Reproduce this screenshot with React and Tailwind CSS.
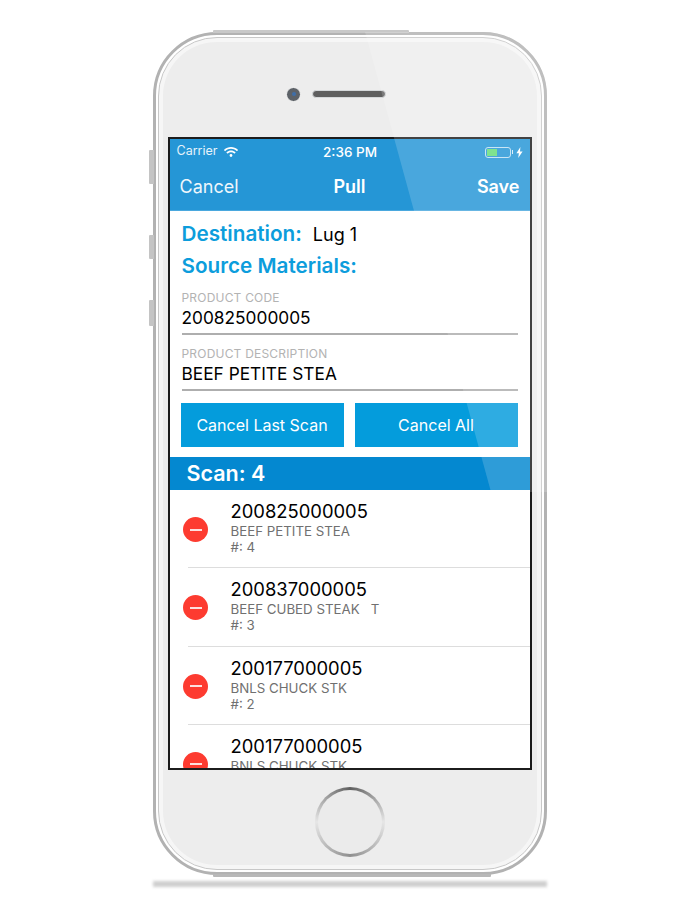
import React from "react";
import { FaWifi } from "react-icons/fa";

const rows = [
  { code: "200825000005", name: "BEEF PETITE STEA", count: 4 },
  { code: "200837000005", name: "BEEF CUBED STEAK   T", count: 3 },
  { code: "200177000005", name: "BNLS CHUCK STK", count: 2 },
  { code: "200177000005", name: "BNLS CHUCK STK", count: 1 },
];

const SideButton = ({ className }) => (
  <div className={`absolute left-[-7px] w-[5px] bg-[#c4c4c4] rounded-l-[1px] ${className}`} />
);

const Field = ({ label, value }) => (
  <div className="mx-[12px] h-[56px] flex flex-col border-b-2 border-[#aeaeae]">
    <div className="mt-[11px] text-[12px] leading-[16px] text-[#b3b3b3] tracking-[0.2px]">{label}</div>
    <div className="text-[17.3px] leading-[24px] text-black">{value}</div>
  </div>
);

const Row = ({ code, name, count, last }) => (
  <div className="h-[78.3px] shrink-0 flex">
    <div className="w-[61px] shrink-0 flex justify-center items-start">
      <div className="ml-[-9px] mt-[27px] w-[25px] h-[25px] rounded-full bg-[#fd3b30] flex items-center justify-center">
        <div className="w-[12px] h-[2px] bg-[#fde0de]" />
      </div>
    </div>
    <div className={`flex-1 pt-[9px] ${last ? "" : "border-b border-[#dddddd]"} ml-[-43px] pl-[43px]`}>
      <div className="text-[18.4px] leading-[24px] text-black">{code}</div>
      <div className="text-[13.3px] leading-[16px] text-[#707070] whitespace-pre">{name}</div>
      <div className="text-[13.3px] leading-[16px] text-[#707070]">#: {count}</div>
    </div>
  </div>
);

export default function App() {
  return (
    <div className="w-[700px] h-[900px] bg-white flex flex-col items-center pt-[32px] font-['Inter','Liberation_Sans',sans-serif]">
      <div className="relative w-[394px] h-[843px] shrink-0 rounded-[64px] border-[3px] border-[#b2b2b2] bg-white p-[2px]">
        <SideButton className="top-[115px] h-[34px]" />
        <SideButton className="top-[200px] h-[24px]" />
        <SideButton className="top-[265px] h-[26px]" />
        <div className="absolute left-[57px] top-[-5px] w-[196px] h-[3px] bg-[#c8c8c8] rounded-t-[1px]" />
        <div className="absolute left-[57px] bottom-[-5px] w-[278px] h-[3px] bg-[#b8b8b8] rounded-b-[1px]" />

        <div className="w-full h-full rounded-[59px] border border-[#c8c8c8] bg-[#f6f6f6] p-[4px]">
          <div className="w-full h-full rounded-[54px] bg-[#ededed] flex flex-col items-center">
            <div className="h-[95px] shrink-0 w-full flex items-center justify-center gap-[11px] pt-[9px] pr-[28px]">
              <div className="w-[15px] h-[15px] rounded-full border border-[#f5f5f5] bg-[#5d6268] flex items-center justify-center">
                <div className="w-[4px] h-[4px] rounded-full bg-[#3f6ea8]" />
              </div>
              <div className="w-[74px] h-[8px] rounded-full border border-[#d5d8da] bg-[#5f5f5f]" />
            </div>

            {/* screen */}
            <div className="w-[364px] h-[633px] shrink-0 mr-[1px] border-2 border-[#1c1c1c] bg-white flex flex-col overflow-hidden">
              <div className="h-[72px] shrink-0 bg-[#2596d6] border-b border-[#4aa8de] text-white flex flex-col">
                <div className="h-[24px] shrink-0 mt-[1px] px-[7px] flex items-center relative">
                  <span className="text-[12.5px] text-[#e6f3fb] mt-[-1px]">Carrier</span>
                  <FaWifi className="ml-[7px] text-[14px] mt-[-1px]" />
                  <span className="absolute left-[1px] right-0 text-center text-[13.5px] font-medium">2:36 PM</span>
                  <div className="ml-auto flex items-center">
                    <div className="w-[26px] h-[11px] border border-[#bfe0f3] rounded-[3px] p-[1px]">
                      <div className="w-[10px] h-full bg-[#66de7a]" />
                    </div>
                    <div className="w-[1px] h-[4px] bg-[#d6ecf8] ml-[1px]" />
                    <svg width="7" height="11" viewBox="0 0 7 11" className="ml-[3px]">
                      <path d="M4.4 0 0.4 6.2h2.5L2.2 11 6.6 4.5H4L4.4 0z" fill="white" />
                    </svg>
                  </div>
                </div>
                <div className="flex-1 px-[10px] pb-[1px] flex items-center justify-between text-[18px] relative">
                  <span className="text-[#eef7fc]">Cancel</span>
                  <span className="absolute left-0 right-0 text-center font-semibold">Pull</span>
                  <span className="font-semibold">Save</span>
                </div>
              </div>

              <div className="shrink-0 flex flex-col">
                <div className="h-[44px] shrink-0 mx-[12px] pt-[9px] flex items-baseline text-black">
                  <span className="text-[20.7px] leading-[28px] font-semibold text-[#0c9ddc]">Destination:</span>
                  <span className="ml-[11px] text-[18px]">Lug 1</span>
                </div>
                <div className="h-[22px] shrink-0 mx-[12px] text-[20.7px] leading-[22px] font-semibold text-[#0c9ddc]">
                  Source Materials:
                </div>
                <div className="h-[2px] shrink-0" />
                <Field label="PRODUCT CODE" value="200825000005" />
                <Field label="PRODUCT DESCRIPTION" value="BEEF PETITE STEA" />
                <div className="mx-[11px] mt-[12px] flex gap-[11px]">
                  <button className="w-[163px] h-[44px] bg-[#049cdc] text-white text-[16px]">Cancel Last Scan</button>
                  <button className="w-[163px] h-[44px] bg-[#049cdc] text-white text-[16px]">Cancel All</button>
                </div>
              </div>

              <div className="h-[33px] shrink-0 mt-[10px] bg-[#0488d0] text-white text-[21.5px] font-semibold px-[17px] flex items-center">
                Scan: 4
              </div>

              {rows.map((r, i) => (
                <Row key={i} {...r} last={i === rows.length - 1} />
              ))}
            </div>

            <div className="flex-1 w-full flex items-center justify-center pt-[9px]">
              <div className="w-[70px] h-[70px] rounded-full p-[3px] bg-[conic-gradient(#5f5f5f,#e6e6e6_25%,#8f8f8f_50%,#e6e6e6_75%,#5f5f5f)]">
                <div className="w-full h-full rounded-full bg-[#ebebeb]" />
              </div>
            </div>
          </div>
        </div>

        {/* diagonal glare across the glass */}
        <div className="absolute inset-[-3px] rounded-[64px] pointer-events-none bg-white/[0.17] [clip-path:polygon(212px_0,394px_0,394px_460px,338px_460px)]" />
      </div>

      {/* shadow under the phone */}
      <div className="mt-[6px] w-[394px] h-[6px] bg-[#cfcfcf] blur-[1.5px]" />
    </div>
  );
}
